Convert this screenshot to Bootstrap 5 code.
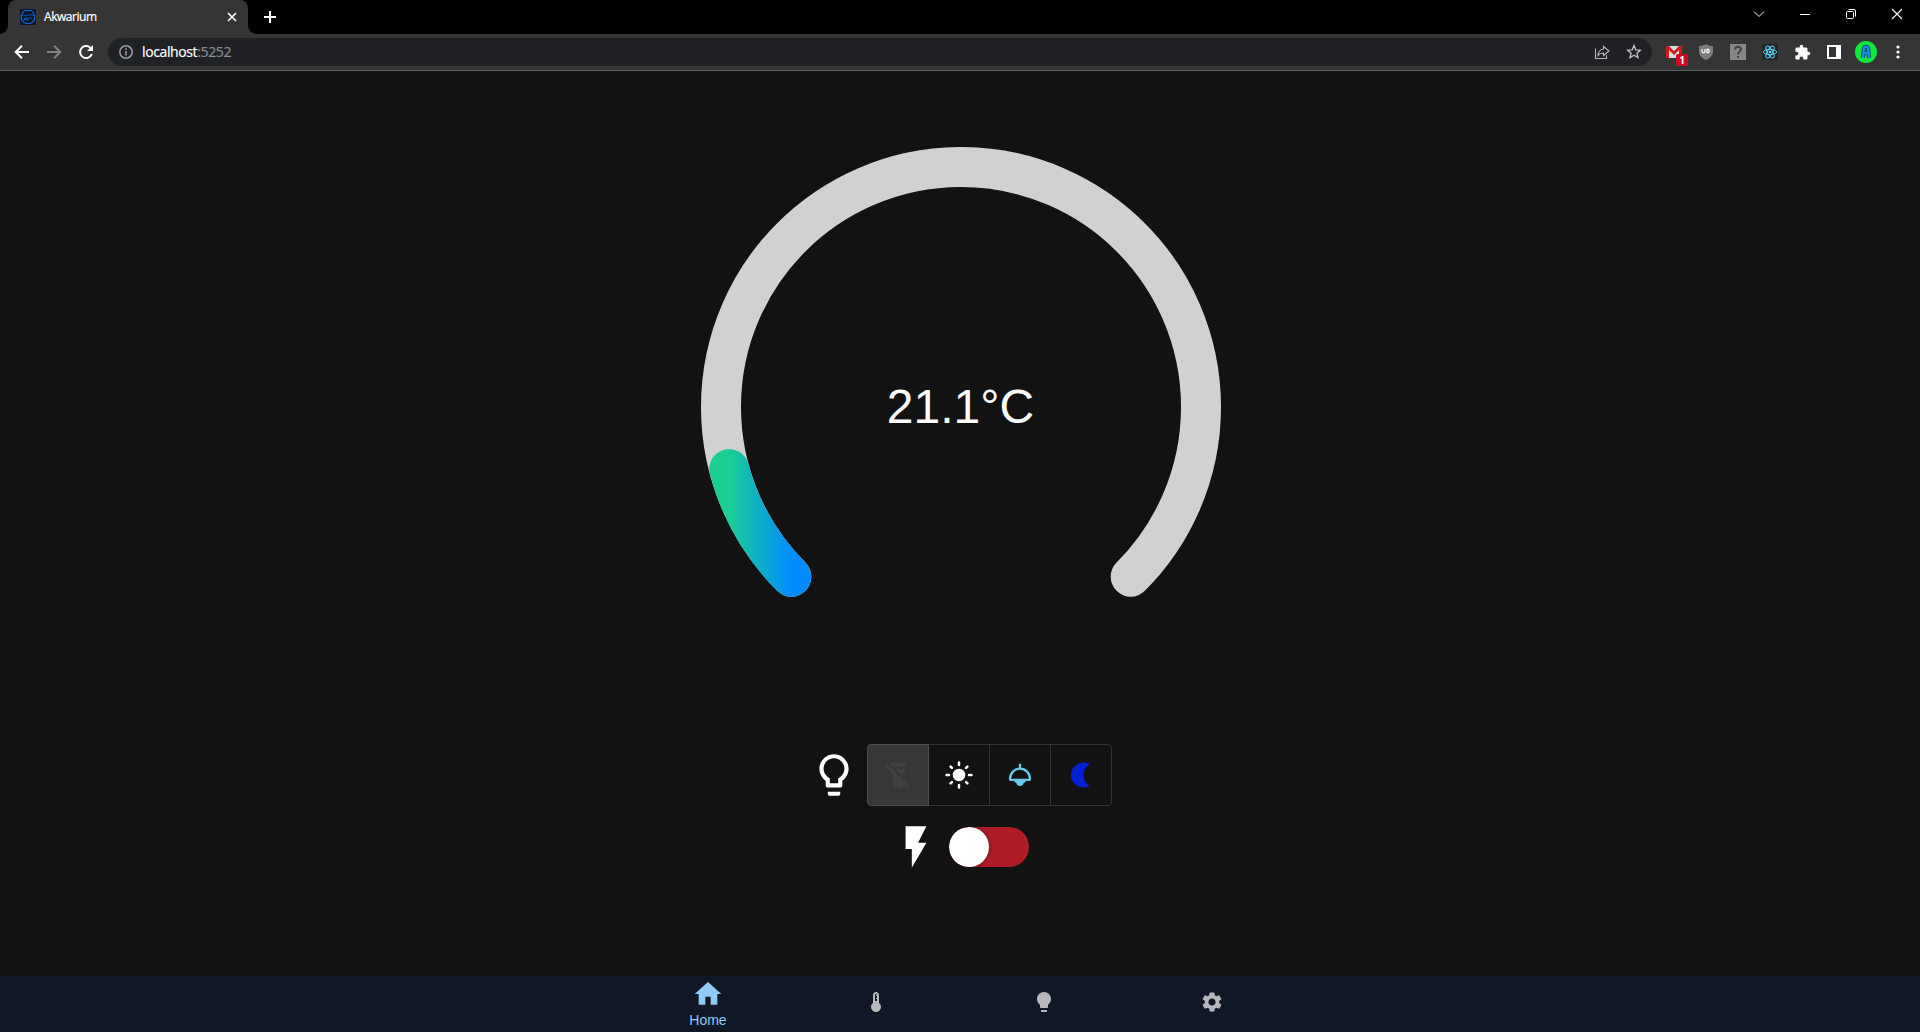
<!DOCTYPE html>
<html lang="pl">
<head>
<meta charset="utf-8">
<meta name="viewport" content="width=device-width, initial-scale=1">
<title>Akwarium</title>
<link rel="stylesheet" href="https://cdn.jsdelivr.net/npm/bootstrap@5.3.0/dist/css/bootstrap.min.css">
<style>
body{background:#121212;color:#fff;font-family:"Liberation Sans",Arial,sans-serif;height:100vh;overflow:hidden}
svg{display:block;flex:none}
.ui{font-family:"Open Sans","Noto Sans",sans-serif}
.tabstrip{height:34px;background:#000;padding-left:8px}
.browser-tab{width:240px;height:34px;background:#353535;border-radius:8px 8px 0 0;padding:0 9px 0 12px;font-size:12px;position:relative}
.browser-tab::before,.browser-tab::after{content:"";position:absolute;bottom:0;width:8px;height:8px}
.browser-tab::before{left:-8px;background:radial-gradient(circle at 0 0,#000 7.5px,#353535 8px)}
.browser-tab::after{right:-8px;background:radial-gradient(circle at 100% 0,#000 7.5px,#353535 8px)}
.tab-title{margin-left:8px;letter-spacing:-.45px;-webkit-text-stroke:.2px}
.new-tab{margin-left:14px}
.window-buttons{padding-right:15px;gap:30px;height:28px}
.toolbar{height:37px;background:#353535;border-bottom:1px solid #5f6060;padding:0 10px 0 14px}
.nav-buttons{gap:16px;width:94px}
.omnibox{height:28px;width:1544px;border-radius:14px;background:#202124;padding:0 10px;font-size:14px}
.url{margin-left:8px;letter-spacing:-.38px;line-height:28px;-webkit-text-stroke:.2px}
.url span{color:#898b8e}
.extensions{gap:8px;margin-left:10px}
.tool{width:24px;height:24px;display:flex;align-items:center;justify-content:center;position:relative;flex:none}
.mail-count{position:absolute;left:14px;top:14px;width:12px;height:12px;border-radius:2px;background:#d00824;font:bold 10px/12px "Open Sans",sans-serif;text-align:center}
.gauge-area{padding-top:75.5px;height:673px}
.reading{font-size:48px;line-height:1;position:absolute;inset:0;padding-top:236px;text-align:center;padding-left:1px}
.mode-group .mode{height:62px;width:62px;padding:0;border:1px solid #333;background:transparent;border-radius:4px;display:flex;align-items:center;justify-content:center}
.mode-group .mode:not(:first-child){width:62px;margin-left:-1px}
.mode-group .mode.active{background:#373737;border-color:#4d4d4d;padding-left:1px}
.power-row{margin-top:16px}
.switch-track{width:80px;height:40px;border-radius:20px;background:#ae1d26;overflow:hidden}
.switch-knob{width:40px;height:40px;border-radius:50%;background:#fff;box-shadow:0 0 4px rgba(0,0,0,.5)}
.bottom-bar{height:56px;background:#101727}
.bottom-item{width:168px;height:52px;color:#b7b8bc;font-size:14px;line-height:17px}
.bottom-item svg{margin-top:2px;margin-bottom:2px}
.bottom-item.current{color:#90caf9}
</style>
</head>
<body class="d-flex flex-column">
<header class="ui">
  <div class="tabstrip d-flex align-items-start">
    <div class="browser-tab d-flex align-items-center">
      <svg width="16" height="16" viewBox="0 0 16 16" fill="none" stroke="#1765d8"><path fill="#07152c" stroke="none" d="M0 0h16v16H0z"/><path d="M4 1.500h8M4 2.500C.7 5 .5 9 2.200 11.700c1.400 2.200 3.500 2.800 5.800 2.800s4.400-.6 5.800-2.800C15.500 9 15.300 5 12 2.500" stroke-width="1.200"/><path d="M2 6.500c2-1 3 .7 5 0s4-.8 7 0" stroke-width=".7"/><path d="M4 9l1.200 1L4 11.500M5 10c1-1.200 3-1.200 4 0-1 1.400-3 1.400-4 0M10 9h2" stroke-width=".9"/></svg>
      <span class="tab-title">Akwarium</span>
      <svg class="ms-auto" width="14" height="14" viewBox="0 0 14 14" stroke="#fff" stroke-width="1.700"><path d="M3 3l8 8M11 3l-8 8"/></svg>
    </div>
    <svg class="new-tab" width="16" height="34" viewBox="0 0 16 34" stroke="#fff" stroke-width="2"><path d="M2 17h12M8 11v12"/></svg>
    <div class="window-buttons d-flex align-items-center ms-auto">
      <svg width="16" height="16" viewBox="0 0 16 16" fill="none" stroke="#fff"><path d="M3 5.500l5 5 5-5"/></svg>
      <svg width="16" height="16" viewBox="0 0 16 16" stroke="#fff"><path d="M3 8.500h10"/></svg>
      <svg width="16" height="16" viewBox="0 0 16 16" fill="none" stroke="#fff"><rect x="3.500" y="5.500" width="7" height="7" rx="1"/><path d="M5.500 3.500h5.500a1.500 1.500 0 0 1 1.500 1.500v5.500"/></svg>
      <svg width="16" height="16" viewBox="0 0 16 16" stroke="#fff" stroke-width="1.100"><path d="M3 3l10 10M13 3L3 13"/></svg>
    </div>
  </div>
  <div class="toolbar d-flex align-items-center">
    <div class="nav-buttons d-flex align-items-center flex-shrink-0">
      <svg width="16" height="16" viewBox="0 0 16 16" fill="none" stroke="#fff" stroke-width="2"><path d="M15 8H2.500M8 1.700L1.700 8 8 14.300"/></svg>
      <svg width="16" height="16" viewBox="0 0 16 16" fill="none" stroke="#818181" stroke-width="2"><path d="M1 8h12.500M8 1.700L14.300 8 8 14.300"/></svg>
      <svg width="16" height="16" viewBox="0 0 16 16" fill="none" stroke="#fff" stroke-width="2"><path d="M13.800 10A6 6 0 1 1 12.300 3.700L14 5.400"/><path d="M15 1v6H9z" fill="#fff" stroke="none"/></svg>
    </div>
    <div class="omnibox d-flex align-items-center">
      <svg width="16" height="16" viewBox="0 0 16 16" fill="none" stroke="#9aa0a6" stroke-width="1.500"><circle cx="8" cy="8" r="6.200"/><path d="M8 7v4.500M8 4.300v1.600"/></svg>
      <div class="url">localhost<span>:5252</span></div>
      <div class="d-flex ms-auto gap-3">
        <svg width="16" height="16" viewBox="0 0 16 16" fill="none" stroke="#b4b6b9" stroke-width="1.100"><path d="M1.500 4.500v10h11V11"/><path d="M9.500 2.500L15 7l-5.500 4.500V9C7 9 5.300 9.800 4 11.500 4.300 8 6 5.500 9.500 5z"/></svg>
        <svg width="16" height="16" viewBox="0 0 16 16" fill="none" stroke="#c4c6c9" stroke-width="1.300"><path d="M8 1.600l1.800 4.200 4.600.4-3.500 3 1.100 4.500L8 11.300l-4 2.400 1.100-4.500-3.500-3 4.600-.4z"/></svg>
      </div>
    </div>
    <div class="extensions d-flex align-items-center">
      <div class="tool"><svg width="16" height="14" viewBox="0 0 16 14"><path fill="#dcdcdc" d="M0 1h16v12H0z"/><path fill="#d11920" d="M0 1h3l5 5 5-5h3v12h-3V5L8 10 3 5v8H0z"/></svg><span class="mail-count">1</span></div>
      <div class="tool"><svg width="16" height="16" viewBox="0 0 16 16"><path fill="#7c7c7c" d="M8 0c2 1.400 4 2 7 2v5c0 4.500-2.500 7-7 9-4.500-2-7-4.500-7-9V2c3 0 5-.6 7-2z"/><path d="M4 5v2.200a1.500 1.500 0 0 0 3 0V5M9 5v3.700h.8a1.800 1.800 0 0 0 0-3.500H9" fill="none" stroke="#fff" stroke-width="1.200"/></svg></div>
      <div class="tool"><svg width="16" height="16" viewBox="0 0 16 16"><path fill="#868686" d="M0 0h16v16H0z"/><path d="M5 5.400C5 2 11 2 11 5.200 11 7.500 8 7.500 8 10.500M8 12v2" fill="none" stroke="#3f3f3f" stroke-width="2"/></svg></div>
      <div class="tool"><svg width="16" height="16" viewBox="0 0 16 16" fill="none" stroke="#61dafb" stroke-width=".9"><path fill="#20232a" stroke="none" d="M0 0h16v16H0z"/><ellipse cx="8" cy="8" rx="6.700" ry="2.600"/><ellipse cx="8" cy="8" rx="6.700" ry="2.600" transform="rotate(60 8 8)"/><ellipse cx="8" cy="8" rx="6.700" ry="2.600" transform="rotate(120 8 8)"/><circle cx="8" cy="8" r="1.300" fill="#61dafb" stroke="none"/></svg></div>
      <div class="tool"><svg width="17" height="17" viewBox="0 0 24 24" fill="#fff"><path d="M20.500 11H19V7c0-1.100-.9-2-2-2h-4V3.500a2.500 2.500 0 0 0-5 0V5H4c-1.100 0-2 .9-2 2v3.800h1.500a2.700 2.700 0 0 1 0 5.400H2V20c0 1.100.9 2 2 2h3.800v-1.500a2.700 2.700 0 0 1 5.400 0V22H17c1.100 0 2-.9 2-2v-4h1.500a2.500 2.500 0 0 0 0-5z"/></svg></div>
      <div class="tool"><svg width="14" height="14" viewBox="0 0 14 14"><path fill="#fff" d="M0 0h14v14H0z"/><path fill="#353535" d="M2 2h7v10H2z"/></svg></div>
      <div class="tool"><svg width="22" height="22" viewBox="0 0 22 22"><circle cx="11" cy="11" r="11" fill="#0ee83d"/><path d="M8 17l.8-9c.2-3 4.200-3 4.400 0l.8 9M9 12h4" fill="none" stroke="#063b50" stroke-width="4"/><path d="M8 17l.8-9c.2-3 4.200-3 4.400 0l.8 9M9 12h4" fill="none" stroke="#168bf4" stroke-width="2.400"/></svg></div>
      <div class="tool"><svg width="16" height="16" viewBox="0 0 16 16" fill="#fff"><circle cx="8" cy="3" r="1.600"/><circle cx="8" cy="8" r="1.600"/><circle cx="8" cy="13" r="1.600"/></svg></div>
    </div>
  </div>
</header>

<main class="flex-grow-1">
  <section class="gauge-area">
    <div class="position-relative mx-auto" style="width:520px">
      <svg width="522" height="460" viewBox="0 0 522 460" fill="none" stroke-width="40" stroke-linecap="round">
        <defs><linearGradient id="water" gradientUnits="userSpaceOnUse" x1="29" y1="0" x2="91" y2="0"><stop offset="0" stop-color="#1bce94"/><stop offset="1" stop-color="#008cff"/></linearGradient></defs>
        <path d="M91.300 429.700A240 240 0 1 1 430.700 429.700" stroke="#d1d1d1"/>
        <path d="M91.300 429.700A240 240 0 0 1 29.200 322.100" stroke="url(#water)"/>
      </svg>
      <div class="reading">21.1°C</div>
    </div>
  </section>
  <section class="d-flex align-items-center justify-content-center gap-2">
    <svg width="50" height="50" viewBox="0 0 24 24" fill="#fff"><path d="M9 21c0 .55.45 1 1 1h4c.55 0 1-.45 1-1v-1H9v1zm3-19C8.140 2 5 5.140 5 9c0 2.380 1.190 4.470 3 5.740V17c0 .55.45 1 1 1h6c.55 0 1-.45 1-1v-2.260c1.810-1.270 3-3.360 3-5.740 0-3.860-3.140-7-7-7zm2.850 11.100l-.85.6V16h-4v-2.300l-.85-.6C7.800 12.160 7 10.630 7 9c0-2.760 2.240-5 5-5s5 2.240 5 5c0 1.630-.8 3.160-2.150 4.100z"/></svg>
    <div class="btn-group mode-group" role="group">
      <button class="btn mode active" aria-label="Off"><svg width="30" height="30" viewBox="0 0 24 24" fill="#414141"><path d="M18 5V2H6v1.170L7.830 5zM16 11l2-3V7H9.830L16 13.170zM2.810 2.810L1.390 4.220 8 10.830V22h8v-3.170l3.780 3.780 1.410-1.410z"/></svg></button>
      <button class="btn mode" aria-label="Day"><svg width="30" height="30" viewBox="0 0 24 24" fill="#fff" stroke="#fff" stroke-width="2" stroke-linecap="round"><circle cx="12" cy="12" r="5" stroke="none"/><path d="M2 12h2M20 12h2M12 2v2M12 20v2M5.300 5.300l1 1M17.700 17.700l1 1M5.300 18.700l1-1M17.700 6.300l1-1"/></svg></button>
      <button class="btn mode" aria-label="Lamp"><svg width="30" height="30" viewBox="0 0 30 30" fill="none" stroke="#65cbef" stroke-width="2.300"><path d="M15 3.700V8M5.100 19.800v-1.300a9.900 9.800 0 0 1 19.800 0v1.300z" stroke-linejoin="round"/><path d="M9.500 20h11v2.200l-1.700.6C18.200 25 16.800 26 15 26s-3.200-1-3.800-3.200l-1.700-.6z" fill="#65cbef" stroke="none"/></svg></button>
      <button class="btn mode" aria-label="Night"><svg width="30" height="30" viewBox="0 0 24 24" fill="#0320d5"><path d="M14 2c1.820 0 3.530.5 5 1.350-2.990 1.730-5 4.950-5 8.650s2.010 6.920 5 8.650C17.530 21.500 15.820 22 14 22 8.480 22 4 17.520 4 12S8.480 2 14 2z"/></svg></button>
    </div>
  </section>
  <section class="power-row d-flex align-items-center justify-content-center gap-2">
    <svg width="50" height="50" viewBox="0 0 24 24" fill="#fff"><path d="M7 2v11h3v9l7-12h-4l4-8z"/></svg>
    <div class="switch-track"><div class="switch-knob"></div></div>
  </section>
</main>

<nav class="bottom-bar d-flex justify-content-center">
  <div class="bottom-item current d-flex flex-column align-items-center"><svg width="32" height="32" viewBox="0 0 24 24" fill="currentColor"><path d="M10 20v-6h4v6h5v-8h3L12 3 2 12h3v8z"/></svg><span>Home</span></div>
  <div class="bottom-item d-flex align-items-center justify-content-center"><svg width="24" height="24" viewBox="0 0 24 24" fill="currentColor"><path d="M15 13V5c0-1.660-1.340-3-3-3S9 3.340 9 5v8c-1.210.91-2 2.370-2 4 0 2.760 2.240 5 5 5s5-2.240 5-5c0-1.630-.79-3.090-2-4zm-4-8c0-.55.45-1 1-1s1 .45 1 1h-1v1h1v2h-1v1h1v2h-2V5z"/></svg></div>
  <div class="bottom-item d-flex align-items-center justify-content-center"><svg width="24" height="24" viewBox="0 0 24 24" fill="currentColor"><path d="M9 21c0 .5.4 1 1 1h4c.6 0 1-.5 1-1v-1H9v1zm3-19C8.100 2 5 5.100 5 9c0 2.400 1.200 4.500 3 5.700V17c0 .5.4 1 1 1h6c.6 0 1-.5 1-1v-2.300c1.800-1.300 3-3.400 3-5.700 0-3.900-3.100-7-7-7z"/></svg></div>
  <div class="bottom-item d-flex align-items-center justify-content-center"><svg width="24" height="24" viewBox="0 0 24 24" fill="currentColor"><path d="M19.140 12.940c.04-.3.06-.61.06-.94 0-.32-.02-.64-.07-.94l2.030-1.580c.18-.14.23-.41.12-.61l-1.920-3.320c-.12-.22-.37-.29-.59-.22l-2.390.96c-.5-.38-1.030-.7-1.620-.94l-.36-2.540c-.04-.24-.24-.41-.48-.41h-3.840c-.24 0-.43.17-.47.41l-.36 2.540c-.59.24-1.130.57-1.620.94l-2.390-.96c-.22-.08-.47 0-.59.22L2.740 8.870c-.12.21-.08.47.12.61l2.030 1.580c-.05.3-.09.63-.09.94s.02.64.07.94l-2.030 1.580c-.18.14-.23.41-.12.61l1.920 3.320c.12.22.37.29.59.22l2.390-.96c.5.38 1.030.7 1.620.94l.36 2.540c.05.24.24.41.48.41h3.840c.24 0 .44-.17.47-.41l.36-2.540c.59-.24 1.130-.56 1.620-.94l2.390.96c.22.08.47 0 .59-.22l1.920-3.320c.12-.22.07-.47-.12-.61l-2.010-1.580zM12 15.600c-1.980 0-3.600-1.620-3.600-3.600s1.620-3.600 3.600-3.600 3.600 1.620 3.600 3.600-1.620 3.600-3.600 3.600z"/></svg></div>
</nav>
<script src="https://cdn.jsdelivr.net/npm/bootstrap@5.3.0/dist/js/bootstrap.bundle.min.js"></script>
</body>
</html>
